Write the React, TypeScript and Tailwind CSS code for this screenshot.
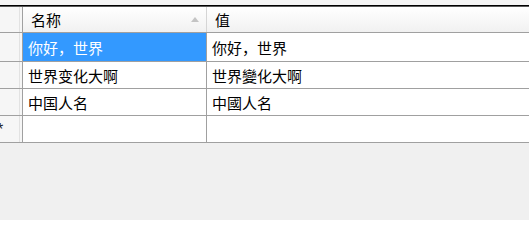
import React from "react";

const rows = [
  { a: "你好，世界", b: "你好，世界", sel: true, h: "h-[29px]" },
  { a: "世界变化大啊", b: "世界變化大啊", sel: false, h: "h-[27px]" },
  { a: "中国人名", b: "中國人名", sel: false, h: "h-[27px]" },
];

function RowHead({ children }: { children?: React.ReactNode }) {
  return (
    <div className="w-[23px] flex border-r border-[#a0a0a0] bg-[#f6f6f6]">
      <div className="w-[20px] border-r border-[#e2e2e2] flex items-center overflow-hidden">{children}</div>
      <div className="flex-1" />
    </div>
  );
}

export default function App() {
  return (
    <div className="w-[529px] h-[220px] bg-[#f0f0f0] overflow-hidden text-[15px] text-black font-['Noto_Sans_CJK_SC','Noto_Sans',sans-serif]">
      <div className="h-[5px] bg-[#f5f5f5]" />
      <div className="h-px bg-black" />
      <div className="h-px bg-[#5a5a5a]" />
      <div className="flex h-[26px] bg-gradient-to-b from-white to-[#f1f1f1] border-b border-[#a0a0a0]">
        <RowHead />
        <div className="w-[184px] border-r border-[#d5d5d5] flex items-center pl-[8px] pr-[7px]">
          <span className="flex-1 leading-none">名称</span>
          <svg width="8" height="5" viewBox="0 0 8 5" className="mb-[1px]">
            <path d="M0 5 L4 0 L8 5 Z" fill="#c4c4c4" />
          </svg>
        </div>
        <div className="flex-1 flex items-center pl-[8px] leading-none">值</div>
      </div>
      {rows.map((r, i) => (
        <div key={i} className={"flex bg-white border-b border-[#a0a0a0] " + r.h}>
          <RowHead />
          <div
            className={
              "w-[184px] border-r border-[#a0a0a0] flex items-center pl-[5px] leading-none " +
              (r.sel ? "bg-[#3399ff] text-white" : "")
            }
          >
            {r.a}
          </div>
          <div className="flex-1 flex items-center pl-[5px] leading-none">{r.b}</div>
        </div>
      ))}
      <div className="flex h-[27px] bg-white border-b border-[#a0a0a0]">
        <RowHead>
          <span className="-ml-[3px] mt-[2px] text-[16px] leading-none text-[#222] font-['Liberation_Sans',sans-serif]">*</span>
        </RowHead>
        <div className="w-[184px] border-r border-[#a0a0a0]" />
        <div className="flex-1" />
      </div>
    </div>
  );
}
